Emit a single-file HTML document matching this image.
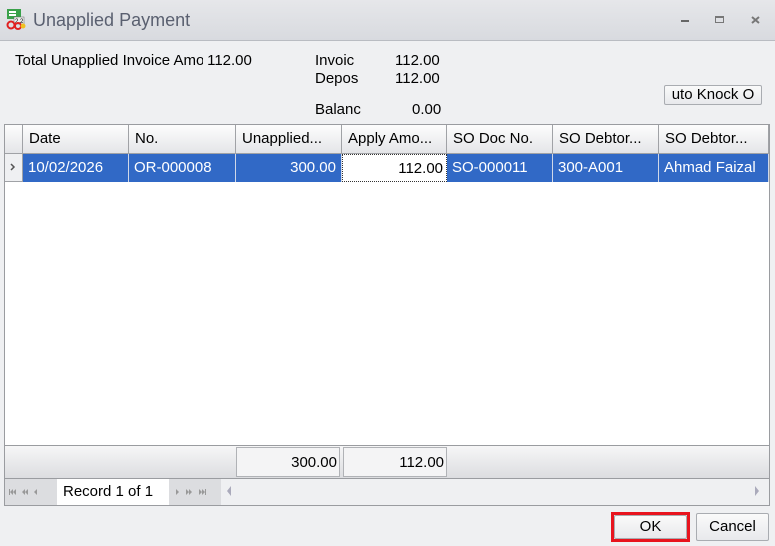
<!DOCTYPE html><html><head><style>
body{margin:0;width:775px;height:546px;background:#eff0f2;font-family:"Liberation Sans",sans-serif;font-size:15px;position:relative;overflow:hidden;color:#000}
.a{position:absolute;white-space:nowrap}
.title{left:0;top:0;width:775px;height:40px;background:linear-gradient(#e6e7ea,#d8dadf);border-bottom:1px solid #b9bcc2}
.grid{left:4px;top:124px;width:766px;height:382px;background:#fff;border:1px solid #9a9ca0;box-sizing:border-box}
.h{top:0;height:29px;background:linear-gradient(#fdfdfd,#e4e5e8);border-right:1px solid #a0a2a6;border-bottom:1px solid #a0a2a6;box-sizing:border-box;padding:5px 6px;font-size:15px}
.r{top:29px;height:28px;background:#3169c6;color:#fff;border-right:1px solid #d0d8e8;box-sizing:border-box;padding:5px 5px;font-size:15px}
.btn{height:28px;border:1px solid #a9acb1;border-radius:2px;background:linear-gradient(#fafafa,#e8e9ec);box-sizing:border-box;text-align:center;line-height:26px;font-size:15px}
</style></head><body>
<div class="a title"></div>
<svg class="a" style="left:6px;top:8px" width="20" height="22" viewBox="0 0 20 22"><rect x="1" y="1" width="14" height="10" fill="#3aa14a"/><rect x="3" y="3" width="7" height="2" fill="#fff"/><rect x="3" y="6" width="7" height="2" fill="#fff"/><rect x="8" y="9" width="10" height="7" fill="#eee" stroke="#666" stroke-width=".5"/><text x="9" y="15" font-size="6" font-family="Liberation Sans">2.2</text><circle cx="5" cy="17" r="3.5" fill="none" stroke="#e02020" stroke-width="2"/><circle cx="12" cy="18" r="3" fill="none" stroke="#e02020" stroke-width="2"/><circle cx="17" cy="18" r="2.5" fill="#f0c020"/></svg>
<div class="a" style="left:33px;top:10px;font-size:18px;color:#5a6070">Unapplied Payment</div>
<div class="a" style="left:681px;top:20px;width:8px;height:2px;background:#666"></div>
<div class="a" style="left:715px;top:16px;width:9px;height:7px;border:1px solid #777;border-top-width:2px;box-sizing:border-box"></div>
<svg class="a" style="left:751px;top:16px" width="9" height="8"><path d="M1 1L8 7M8 1L1 7" stroke="#777" stroke-width="2"/></svg>
<div class="a" style="left:15px;top:52px">Total Unapplied Invoice Am<span style="display:inline-block;width:7px;overflow:hidden;vertical-align:bottom">o</span> 112.00</div>
<div class="a" style="left:315px;top:52px">Invoic</div><div class="a" style="left:395px;top:52px">112.00</div>
<div class="a" style="left:315px;top:70px">Depos</div><div class="a" style="left:395px;top:70px">112.00</div>
<div class="a" style="left:315px;top:101px">Balanc</div><div class="a" style="left:412px;top:101px">0.00</div>
<div class="a btn" style="left:664px;top:85px;width:98px;height:20px;line-height:18px;overflow:hidden">uto Knock O</div>
<div class="a grid">
<div class="a h" style="left:0;width:18px"></div>
<div class="a h" style="left:18px;width:106px">Date</div>
<div class="a h" style="left:124px;width:107px">No.</div>
<div class="a h" style="left:231px;width:106px">Unapplied...</div>
<div class="a h" style="left:337px;width:105px">Apply Amo...</div>
<div class="a h" style="left:442px;width:106px">SO Doc No.</div>
<div class="a h" style="left:548px;width:106px">SO Debtor...</div>
<div class="a h" style="left:654px;width:110px">SO Debtor...</div>
<div class="a" style="left:0;top:29px;width:18px;height:28px;background:#eff0f2;border-right:1px solid #a0a2a6;border-bottom:1px solid #a0a2a6;box-sizing:border-box"><svg width="18" height="28"><path d="M6 10L9 13L6 16" fill="none" stroke="#555" stroke-width="1.5"/></svg></div>
<div class="a r" style="left:18px;width:106px">10/02/2026</div>
<div class="a r" style="left:124px;width:107px">OR-000008</div>
<div class="a r" style="left:231px;width:106px;text-align:right">300.00</div>
<div class="a" style="left:337px;top:29px;width:105px;height:28px;background:#fff;border:1px dotted #333;box-sizing:border-box;padding:5px 3px;text-align:right">112.00</div>
<div class="a r" style="left:442px;width:106px">SO-000011</div>
<div class="a r" style="left:548px;width:106px">300-A001</div>
<div class="a r" style="left:654px;width:110px">Ahmad Faizal</div>
<div class="a" style="left:0;top:320px;width:764px;height:34px;background:linear-gradient(#f6f6f7,#dcdde0);border-top:1px solid #9a9ca0;border-bottom:1px solid #9a9ca0;box-sizing:border-box"></div>
<div class="a" style="left:231px;top:322px;width:104px;height:30px;border:1px solid #b0b2b6;box-sizing:border-box;text-align:right;padding:6px 2px;background:#f4f4f5">300.00</div>
<div class="a" style="left:338px;top:322px;width:104px;height:30px;border:1px solid #b0b2b6;box-sizing:border-box;text-align:right;padding:6px 2px;background:#f4f4f5">112.00</div>
<div class="a" style="left:0;top:354px;width:764px;height:26px;background:#eff0f2"></div>
<div class="a" style="left:0;top:354px;width:52px;height:26px;background:#dcdde0"><svg width="52" height="26"><g fill="#999"><rect x="4" y="10" width="1" height="6"/><path d="M5 13L8 10V16ZM8 13L11 10V16Z"/><path d="M17 13L20 10V16ZM20 13L23 10V16Z"/><path d="M29 13L32 10V16Z"/></g></svg></div>
<div class="a" style="left:52px;top:354px;width:112px;height:26px;background:#fff;padding:4px 6px;box-sizing:border-box">Record 1 of 1</div>
<div class="a" style="left:164px;top:354px;width:52px;height:26px;background:#dcdde0"><svg width="52" height="26"><g fill="#999"><path d="M7 10L10 13L7 16Z"/><path d="M17 10L20 13L17 16ZM20 10L23 13L20 16Z"/><path d="M30 10L33 13L30 16ZM33 10L36 13L33 16Z"/><rect x="36" y="10" width="1" height="6"/></g></svg></div>
<svg class="a" style="left:220px;top:360px" width="8" height="12"><path d="M6 1L2 6L6 11Z" fill="#aab"/></svg>
<svg class="a" style="left:748px;top:360px" width="8" height="12"><path d="M2 1L6 6L2 11Z" fill="#aab"/></svg>
</div>
<div class="a" style="left:611px;top:512px;width:79px;height:30px;border:3px solid #e8141e;box-sizing:border-box"></div>
<div class="a btn" style="left:614px;top:515px;width:73px;height:24px;line-height:22px">OK</div>
<div class="a btn" style="left:696px;top:513px;width:73px">Cancel</div>
</body></html>
